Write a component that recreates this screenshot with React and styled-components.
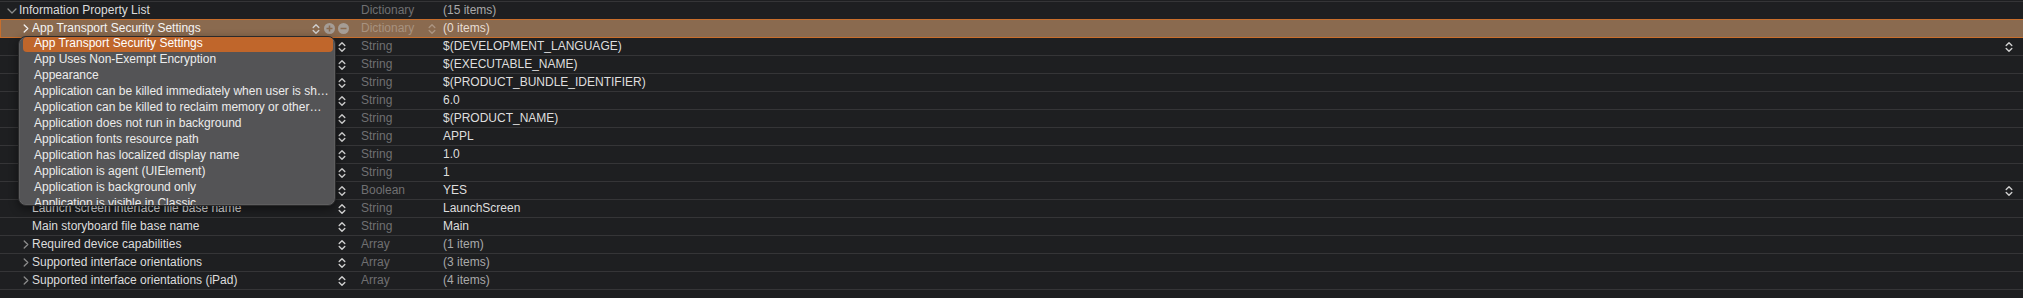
import React from "react"
import styled, { createGlobalStyle, css } from "styled-components"

const bg = "#1e1f21"
const line = "#353537"

const GlobalStyle = createGlobalStyle`
  html, body {
    margin: 0;
    background: ${bg};
  }
  body {
    font-family: "Liberation Sans", Arial, sans-serif;
    font-size: 12px;
    color: #dedede;
    -webkit-font-smoothing: antialiased;
  }
`

const Editor = styled.div`
  position: relative;
  width: 2023px;
  height: 298px;
  padding-top: 1px;
  box-sizing: border-box;
  overflow: hidden;
`

const Rows = styled.div`
  border-bottom: 1px solid ${line};
`

const Row = styled.div`
  position: relative;
  display: grid;
  grid-template-columns: 352px 85px 1fr;
  height: 17px;
  border-top: 1px solid ${line};
  line-height: 17px;

  ${props => props.$selected && css`
    background: #8a6a4f;
    &::after {
      content: "";
      position: absolute;
      inset: -1px 0 -1px 0;
      border: 1px solid #c86e2c;
      border-right: none;
      z-index: 1;
      pointer-events: none;
    }
  `}
`

const KeyCell = styled.div`
  display: flex;
  align-items: center;
  min-width: 0;
  padding-left: ${props => 6 + props.$level * 13}px;
  padding-right: 3px;
`

const Disclosure = styled.span`
  flex: 0 0 13px;
  height: 17px;
  display: flex;
  align-items: center;
  justify-content: ${props => props.$open ? "flex-start" : "center"};
  color: ${props => props.$light ? "#f2f2f2" : "#8c8c8c"};
`

const KeyText = styled.span`
  flex: 1;
  min-width: 0;
  white-space: nowrap;
  overflow: hidden;
  text-overflow: ellipsis;
  color: ${props => props.$light ? "#f4f4f4" : "#dcdcdc"};
`

const Controls = styled.span`
  display: flex;
  align-items: center;
  gap: 4px;
  margin-right: ${props => props.$plain ? 3 : 0}px;
`

const Stepper = styled.svg`
  display: block;
  width: 8px;
  height: 12px;
  color: ${props => props.$dim ? "rgba(255,255,255,0.28)" : "#cfcfcf"};
`

const RoundButton = styled.span`
  width: 11px;
  height: 11px;
  border-radius: 50%;
  background: #a59d96;
  display: flex;
  align-items: center;
  justify-content: center;
  margin-left: ${props => props.$first ? 0 : -1}px;
`

const TypeCell = styled.div`
  display: flex;
  align-items: center;
  justify-content: space-between;
  padding: 0 1px 0 9px;
  color: ${props => props.$selected ? "#a8927f" : "#707072"};
`

const ValueCell = styled.div`
  display: flex;
  align-items: center;
  justify-content: space-between;
  padding: 0 10px 0 6px;
  white-space: nowrap;
  color: ${props => props.$count ? "#a9a9a9" : "#dedede"};
  ${props => props.$selected && css`color: #e8ddd3;`}
`

const Popup = styled.div`
  position: absolute;
  top: 36px;
  left: 18px;
  width: 318px;
  height: 170px;
  box-sizing: border-box;
  padding: 0 2px 0 4px;
  background: #545456;
  border: 1px solid #2a2a2b;
  border-radius: 8px;
  box-shadow: 0 3px 10px rgba(0, 0, 0, 0.45), inset 0 0 0 0.5px rgba(255, 255, 255, 0.12);
  overflow: hidden;
  z-index: 2;
`

const MenuItem = styled.div`
  height: 15px;
  margin-bottom: 1px;
  padding: 0 11px 3px 11px;
  box-sizing: border-box;
  border-radius: 4px;
  display: flex;
  align-items: center;
  white-space: nowrap;
  overflow: hidden;
  color: #ececec;
  ${props => props.$active && css`
    background: #c0662b;
    color: #ffffff;
  `}
`

const StepperIcon = ({ dim }) => (
  <Stepper viewBox="0 0 8 12" $dim={dim}>
    <path d="M1.2 4.6 L4 1.8 L6.8 4.6 M1.2 7.4 L4 10.2 L6.8 7.4" fill="none" stroke="currentColor" strokeWidth="1.4" strokeLinecap="round" strokeLinejoin="round" />
  </Stepper>
)

const Chevron = ({ open }) => open ? (
  <svg width="10" height="6" viewBox="0 0 10 6" style={{ marginLeft: 1 }}>
    <path d="M1 1 L5 5 L9 1" fill="none" stroke="currentColor" strokeWidth="1.3" strokeLinecap="round" strokeLinejoin="round" />
  </svg>
) : (
  <svg width="6" height="9" viewBox="0 0 6 9">
    <path d="M1.2 1 L4.8 4.5 L1.2 8" fill="none" stroke="currentColor" strokeWidth="1.3" strokeLinecap="round" strokeLinejoin="round" />
  </svg>
)

const PlusMinus = ({ plus }) => (
  <svg width="7" height="7" viewBox="0 0 7 7">
    <path d={plus ? "M3.5 0.5 V6.5 M0.5 3.5 H6.5" : "M0.5 3.5 H6.5"} stroke="#8a6a4f" strokeWidth="1.5" />
  </svg>
)

const rows = [
  { key: "Information Property List", level: 0, open: true, type: "Dictionary", value: "(15 items)", count: true, root: true },
  { key: "App Transport Security Settings", level: 1, open: false, type: "Dictionary", value: "(0 items)", count: true, selected: true },
  { key: "Localization native development region", level: 1, type: "String", value: "$(DEVELOPMENT_LANGUAGE)", popup: true },
  { key: "Executable file", level: 1, type: "String", value: "$(EXECUTABLE_NAME)" },
  { key: "Bundle identifier", level: 1, type: "String", value: "$(PRODUCT_BUNDLE_IDENTIFIER)" },
  { key: "InfoDictionary version", level: 1, type: "String", value: "6.0" },
  { key: "Bundle name", level: 1, type: "String", value: "$(PRODUCT_NAME)" },
  { key: "Bundle OS Type code", level: 1, type: "String", value: "APPL" },
  { key: "Bundle version string (short)", level: 1, type: "String", value: "1.0" },
  { key: "Bundle version", level: 1, type: "String", value: "1" },
  { key: "Application requires iPhone environment", level: 1, type: "Boolean", value: "YES", popup: true },
  { key: "Launch screen interface file base name", level: 1, type: "String", value: "LaunchScreen" },
  { key: "Main storyboard file base name", level: 1, type: "String", value: "Main" },
  { key: "Required device capabilities", level: 1, open: false, type: "Array", value: "(1 item)", count: true },
  { key: "Supported interface orientations", level: 1, open: false, type: "Array", value: "(3 items)", count: true },
  { key: "Supported interface orientations (iPad)", level: 1, open: false, type: "Array", value: "(4 items)", count: true },
]

const menu = [
  "App Transport Security Settings",
  "App Uses Non-Exempt Encryption",
  "Appearance",
  "Application can be killed immediately when user is sh…",
  "Application can be killed to reclaim memory or other…",
  "Application does not run in background",
  "Application fonts resource path",
  "Application has localized display name",
  "Application is agent (UIElement)",
  "Application is background only",
  "Application is visible in Classic",
]

const PlistRow = ({ row }) => (
  <Row $selected={row.selected}>
    <KeyCell $level={row.level}>
      <Disclosure $open={row.open} $light={row.selected}>
        {row.open !== undefined && <Chevron open={row.open} />}
      </Disclosure>
      <KeyText $light={row.selected}>{row.key}</KeyText>
      {!row.root && (
        <Controls $plain={!row.selected}>
          <StepperIcon />
          {row.selected && (
            <>
              <RoundButton $first><PlusMinus plus /></RoundButton>
              <RoundButton><PlusMinus /></RoundButton>
            </>
          )}
        </Controls>
      )}
    </KeyCell>
    <TypeCell $selected={row.selected}>
      <span>{row.type}</span>
      {row.selected && <StepperIcon dim />}
    </TypeCell>
    <ValueCell $count={row.count} $selected={row.selected}>
      <span>{row.value}</span>
      {row.popup && <StepperIcon />}
    </ValueCell>
  </Row>
)

const App = () => (
  <>
    <GlobalStyle />
    <Editor>
      <Rows>
        {rows.map(row => <PlistRow key={row.key} row={row} />)}
      </Rows>
      <Popup>
        {menu.map((item, i) => (
          <MenuItem key={item} $active={i === 0}>{item}</MenuItem>
        ))}
      </Popup>
    </Editor>
  </>
)

export default App
